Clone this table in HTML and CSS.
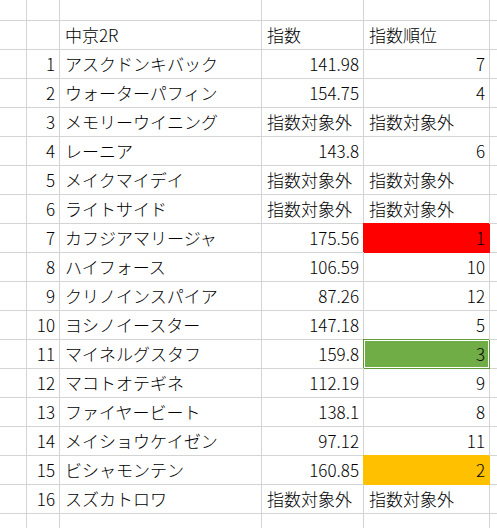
FILE: index.html
```html
<!DOCTYPE html>
<html lang="ja">
<head>
<meta charset="utf-8">
<title>中京2R</title>
<link rel="stylesheet" href="styles.css">
</head>
<body>
<div class="sheet">
  <div class="c"></div><div class="c"></div><div class="c"></div><div class="c"></div><div class="c"></div><div class="c"></div>

  <div class="c"></div><div class="c r"></div><div class="c">中京2R</div><div class="c">指数</div><div class="c">指数順位</div><div class="c"></div>
  <div class="c"></div><div class="c r">1</div><div class="c">アスクドンキバック</div><div class="c r">141.98</div><div class="c r">7</div><div class="c"></div>
  <div class="c"></div><div class="c r">2</div><div class="c">ウォーターパフィン</div><div class="c r">154.75</div><div class="c r">4</div><div class="c"></div>
  <div class="c"></div><div class="c r">3</div><div class="c">メモリーウイニング</div><div class="c">指数対象外</div><div class="c">指数対象外</div><div class="c"></div>
  <div class="c"></div><div class="c r">4</div><div class="c">レーニア</div><div class="c r">143.8</div><div class="c r">6</div><div class="c"></div>
  <div class="c"></div><div class="c r">5</div><div class="c">メイクマイデイ</div><div class="c">指数対象外</div><div class="c">指数対象外</div><div class="c"></div>
  <div class="c"></div><div class="c r">6</div><div class="c">ライトサイド</div><div class="c">指数対象外</div><div class="c">指数対象外</div><div class="c"></div>
  <div class="c"></div><div class="c r">7</div><div class="c">カフジアマリージャ</div><div class="c r">175.56</div><div class="c r red">1</div><div class="c"></div>
  <div class="c"></div><div class="c r">8</div><div class="c">ハイフォース</div><div class="c r">106.59</div><div class="c r">10</div><div class="c"></div>
  <div class="c"></div><div class="c r">9</div><div class="c">クリノインスパイア</div><div class="c r">87.26</div><div class="c r">12</div><div class="c"></div>
  <div class="c"></div><div class="c r">10</div><div class="c">ヨシノイースター</div><div class="c r">147.18</div><div class="c r">5</div><div class="c"></div>
  <div class="c"></div><div class="c r">11</div><div class="c">マイネルグスタフ</div><div class="c r">159.8</div><div class="c r green">3</div><div class="c"></div>
  <div class="c"></div><div class="c r">12</div><div class="c">マコトオテギネ</div><div class="c r">112.19</div><div class="c r">9</div><div class="c"></div>
  <div class="c"></div><div class="c r">13</div><div class="c">ファイヤービート</div><div class="c r">138.1</div><div class="c r">8</div><div class="c"></div>
  <div class="c"></div><div class="c r">14</div><div class="c">メイショウケイゼン</div><div class="c r">97.12</div><div class="c r">11</div><div class="c"></div>
  <div class="c"></div><div class="c r">15</div><div class="c">ビシャモンテン</div><div class="c r">160.85</div><div class="c r orange">2</div><div class="c"></div>
  <div class="c"></div><div class="c r">16</div><div class="c">スズカトロワ</div><div class="c">指数対象外</div><div class="c">指数対象外</div><div class="c"></div>
  <div class="c"></div><div class="c"></div><div class="c"></div><div class="c"></div><div class="c"></div><div class="c"></div>
</div>
</body>
</html>
```

FILE: styles.css
```css
html, body {
  margin: 0;
  padding: 0;
  background: #fff;
  overflow: hidden;
}

.sheet {
  display: grid;
  grid-template-columns: 27px 33px 202px 102px 126px 1fr;
  grid-template-rows: 21px;
  grid-auto-rows: 29px;
  font-family: "Noto Sans CJK JP", "Noto Sans", sans-serif;
  font-weight: 300;
  font-size: 17px;
  color: #000;
}

.c {
  box-sizing: border-box;
  border-right: 1px solid #d4d4d4;
  border-bottom: 1px solid #d4d4d4;
  padding: 0 4px 1px 5px;
  display: flex;
  align-items: center;
  white-space: nowrap;
  overflow: hidden;
  line-height: 1;
}

.r {
  justify-content: flex-end;
}

.red {
  background: #ff0000;
  border-color: #ff0000;
  box-shadow: -1px -1px 0 0 #ff0000;
}

.orange {
  background: #ffc000;
  border-color: #ffc000;
  box-shadow: -1px -1px 0 0 #ffc000;
}

.green {
  background: #70ad47;
  border-color: #5f9b3a;
  box-shadow: -1px -1px 0 0 #5f9b3a, inset 1px 1px 0 0 #ffffff, inset -1px -1px 0 0 #ffffff;
}
```
